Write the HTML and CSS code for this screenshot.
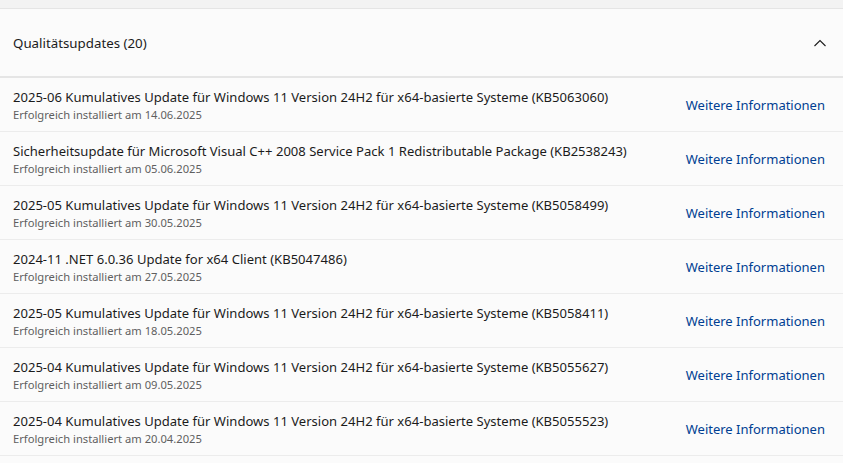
FILE: index.html
```html
<!DOCTYPE html>
<html lang="de">
<head>
<meta charset="utf-8">
<title>Qualitätsupdates</title>
<link rel="stylesheet" href="styles.css">
</head>
<body>
<div class="topband"></div>
<section class="expander">
  <div class="exp-header">
    <span class="exp-title">Qualitätsupdates (20)</span>
    <svg class="chevron" width="12" height="8" viewBox="0 0 12 8"><path d="M0.5 7 L6 1.5 L11.5 7" fill="none" stroke="#1b1b1b" stroke-width="1.1"/></svg>
  </div>
  <ul class="updates">
    <li class="row"><div class="info"><div class="name">2025-06 Kumulatives Update für Windows 11 Version 24H2 für x64-basierte Systeme (KB5063060)</div><div class="date">Erfolgreich installiert am 14.06.2025</div></div><a class="more" href="#">Weitere Informationen</a></li>
    <li class="row"><div class="info"><div class="name">Sicherheitsupdate für Microsoft Visual C++ 2008 Service Pack 1 Redistributable Package (KB2538243)</div><div class="date">Erfolgreich installiert am 05.06.2025</div></div><a class="more" href="#">Weitere Informationen</a></li>
    <li class="row"><div class="info"><div class="name">2025-05 Kumulatives Update für Windows 11 Version 24H2 für x64-basierte Systeme (KB5058499)</div><div class="date">Erfolgreich installiert am 30.05.2025</div></div><a class="more" href="#">Weitere Informationen</a></li>
    <li class="row"><div class="info"><div class="name">2024-11 .NET 6.0.36 Update for x64 Client (KB5047486)</div><div class="date">Erfolgreich installiert am 27.05.2025</div></div><a class="more" href="#">Weitere Informationen</a></li>
    <li class="row"><div class="info"><div class="name">2025-05 Kumulatives Update für Windows 11 Version 24H2 für x64-basierte Systeme (KB5058411)</div><div class="date">Erfolgreich installiert am 18.05.2025</div></div><a class="more" href="#">Weitere Informationen</a></li>
    <li class="row"><div class="info"><div class="name">2025-04 Kumulatives Update für Windows 11 Version 24H2 für x64-basierte Systeme (KB5055627)</div><div class="date">Erfolgreich installiert am 09.05.2025</div></div><a class="more" href="#">Weitere Informationen</a></li>
    <li class="row"><div class="info"><div class="name">2025-04 Kumulatives Update für Windows 11 Version 24H2 für x64-basierte Systeme (KB5055523)</div><div class="date">Erfolgreich installiert am 20.04.2025</div></div><a class="more" href="#">Weitere Informationen</a></li>
  </ul>
</section>
</body>
</html>
```
FILE: styles.css
```css
html, body {
  margin: 0;
  padding: 0;
  background: #fbfbfb;
  font-family: "Noto Sans", "Open Sans", sans-serif;
  color: #1b1b1b;
  overflow: hidden;
}
.topband {
  height: 8px;
  background: #f3f3f3;
  border-bottom: 1px solid #e5e5e5;
}
.expander {
  background: #fbfbfb;
}
.exp-header {
  height: 67px;
  display: flex;
  align-items: center;
  justify-content: space-between;
  padding: 0 17px 0 13px;
  border-bottom: 2px solid #e5e5e5;
}
.exp-title {
  font-size: 13.3px;
}
.chevron {
  display: block;
}
.updates {
  list-style: none;
  margin: 0;
  padding: 0;
}
.row {
  height: 53px;
  box-sizing: content-box;
  border-bottom: 1px solid #ececec;
  display: flex;
  align-items: center;
  justify-content: space-between;
  padding: 0 18px 0 13px;
}
.info {
  display: flex;
  flex-direction: column;
  margin-top: 1px;
}
.name {
  font-size: 13.05px;
  line-height: 20px;
}
.date {
  font-size: 11.2px;
  line-height: 16px;
  color: #5f5f5f;
}
.more {
  font-size: 13px;
  color: #003e92;
  text-decoration: none;
  margin-top: 0;
}
```
